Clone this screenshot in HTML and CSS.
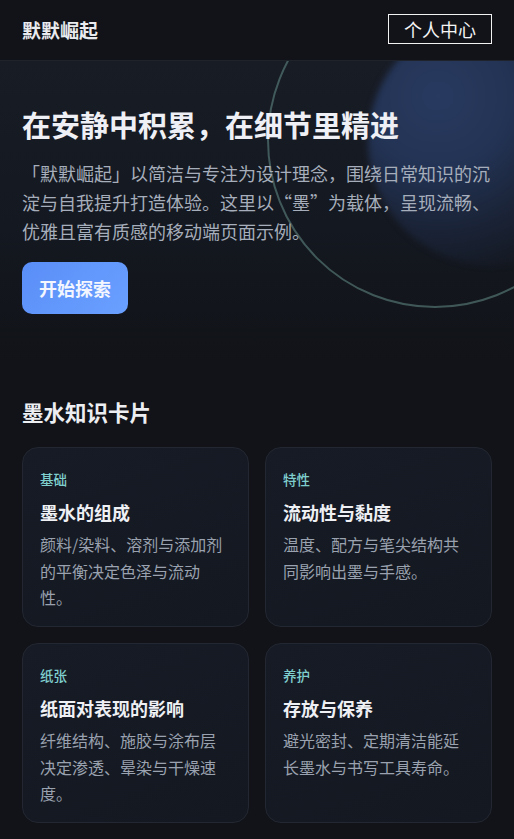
FILE: index.html
```html
<!DOCTYPE html>
<html lang="zh-CN">
<head>
<meta charset="utf-8">
<title>默默崛起</title>
<link rel="stylesheet" href="styles.css">
</head>
<body>
<header class="topbar">
  <div class="logo">默默崛起</div>
  <a class="profile-btn" href="#">个人中心</a>
</header>
<section class="hero">
  <div class="glow"></div>
  <div class="ring"></div>
  <div class="hero-inner">
    <h1 class="hero-title">在安静中积累，在细节里精进</h1>
    <p class="hero-text">「默默崛起」以简洁与专注为设计理念，围绕日常知识的沉淀与自我提升打造体验。这里以“墨”为载体，呈现流畅、优雅且富有质感的移动端页面示例。</p>
    <a class="cta" href="#">开始探索</a>
  </div>
</section>
<section class="cards-section">
  <h2 class="section-title">墨水知识卡片</h2>
  <div class="card-grid">
    <article class="card">
      <div class="card-tag">基础</div>
      <h3 class="card-title">墨水的组成</h3>
      <p class="card-text">颜料/染料、溶剂与添加剂的平衡决定色泽与流动性。</p>
    </article>
    <article class="card">
      <div class="card-tag">特性</div>
      <h3 class="card-title">流动性与黏度</h3>
      <p class="card-text">温度、配方与笔尖结构共同影响出墨与手感。</p>
    </article>
    <article class="card">
      <div class="card-tag">纸张</div>
      <h3 class="card-title">纸面对表现的影响</h3>
      <p class="card-text">纤维结构、施胶与涂布层决定渗透、晕染与干燥速度。</p>
    </article>
    <article class="card">
      <div class="card-tag">养护</div>
      <h3 class="card-title">存放与保养</h3>
      <p class="card-text">避光密封、定期清洁能延长墨水与书写工具寿命。</p>
    </article>
  </div>
</section>
</body>
</html>
```
FILE: styles.css
```css
* { box-sizing: border-box; }
html, body { margin: 0; padding: 0; }
body {
  background: #111318;
  color: #eef0f4;
  font-family: "Noto Sans CJK SC", "Noto Sans", sans-serif;
}
.topbar {
  height: 61px;
  display: flex;
  align-items: center;
  justify-content: space-between;
  padding: 0 22px;
  background: #111318;
  border-bottom: 1px solid #1f232b;
}
.logo {
  font-size: 19px;
  font-weight: 700;
  color: #e9ebef;
  line-height: 1;
  margin-top: -1px;
}
.profile-btn {
  display: block;
  font-size: 18px;
  line-height: 28px;
  padding: 0 15px;
  border: 1px solid #f2f2f2;
  color: #f4f4f4;
  text-decoration: none;
  margin-top: -2px;
}
.hero {
  position: relative;
  overflow: hidden;
  background: linear-gradient(180deg, #181c25 0%, #141820 55%, #111318 100%);
  padding: 44px 22px 48px;
}
.glow {
  position: absolute;
  left: 368px;
  top: -45px;
  width: 250px;
  height: 250px;
  border-radius: 50%;
  background: radial-gradient(circle at 28% 32%, #283a60 0%, #233354 30%, rgba(30, 42, 68, 0.7) 52%, rgba(22, 27, 38, 0) 78%);
  filter: blur(3px);
}
.ring {
  position: absolute;
  left: 267px;
  top: -89px;
  width: 336px;
  height: 336px;
  border-radius: 50%;
  border: 2px solid rgba(100, 142, 136, 0.55);
}
.hero-inner { position: relative; }
.hero-title {
  margin: 0;
  font-size: 29px;
  line-height: 38px;
  font-weight: 700;
  color: #eef0f5;
}
.hero-text {
  margin: 16px 0 0;
  font-size: 18px;
  line-height: 29px;
  color: #a6aebb;
}
.cta {
  display: inline-block;
  margin-top: 16px;
  padding: 13px 17px;
  font-size: 18px;
  line-height: 26px;
  font-weight: 700;
  color: #f3f6ff;
  text-decoration: none;
  border-radius: 10px;
  background: linear-gradient(135deg, #5a8ef8 0%, #6aa0ff 100%);
}
.cards-section {
  padding: 35px 22px 30px;
}
.section-title {
  margin: 0;
  font-size: 21.5px;
  line-height: 30px;
  font-weight: 700;
  color: #eceef2;
}
.card-grid {
  margin-top: 20px;
  display: grid;
  grid-template-columns: 1fr 1fr;
  gap: 16px;
}
.card {
  border: 1px solid #232731;
  border-radius: 16px;
  background: linear-gradient(160deg, #171b25 0%, #141821 100%);
  padding: 22px 17px 15px;
  min-height: 180px;
}
.card-tag {
  font-size: 13.5px;
  line-height: 19px;
  color: #7fcfcf;
  font-weight: 500;
}
.card-title {
  margin: 11px 0 0;
  font-size: 18px;
  line-height: 25px;
  font-weight: 700;
  color: #eef0f4;
}
.card-text {
  margin: 6px 0 0;
  font-size: 16px;
  line-height: 26.5px;
  color: #9aa2af;
}
```
